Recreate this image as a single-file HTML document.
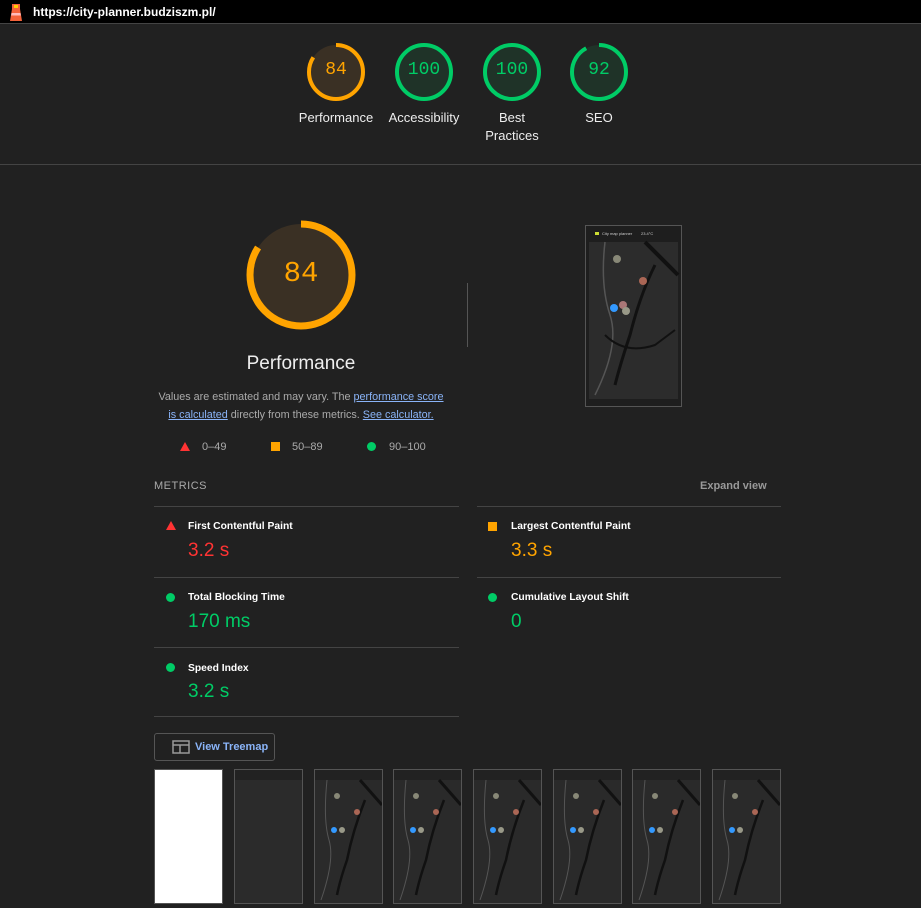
<!DOCTYPE html>
<html><head><meta charset="utf-8"><style>
*{margin:0;padding:0;box-sizing:border-box}
body{width:921px;height:906px;background:#212121;font-family:"Liberation Sans",Arial,sans-serif;color:#fff;position:relative;overflow:hidden}
.a{position:absolute}
.top{left:0;top:0;width:921px;height:24px;background:#000;border-bottom:1px solid #444}
.url{left:33px;top:5px;font-size:12px;font-weight:bold;color:#fff}
.g{position:absolute;width:60px;text-align:center}
.g svg{display:block;margin:0 auto}
.g .n{position:absolute;left:0;top:18px;width:60px;text-align:center;font-family:"Liberation Mono",monospace;font-size:18px}
.gl{position:absolute;width:100px;text-align:center;font-size:13px;line-height:18px;color:#eee}
.hr{height:1px;background:#444}
.mt{font-size:10.3px;font-weight:bold;color:#fff}
.mv{font-size:19px}
.ic{position:absolute}
.tri{width:0;height:0;border-left:5px solid transparent;border-right:5px solid transparent;border-bottom:9px solid #f33}
.sq{width:9px;height:9px;background:#ffa400}
.ci{width:9px;height:9px;border-radius:50%;background:#0c6}
a{color:#8ab4f8;text-decoration:underline}
.fr{position:absolute;top:769px;width:69px;height:135px;border:1px solid #555;background:#2b2b2b}
</style></head><body>
<div class="a top"></div>
<svg class="a" style="left:8px;top:2px" width="16" height="20" viewBox="0 0 16 20"><rect x="4" y="2" width="8" height="5" fill="#f4623a"/><rect x="6" y="3" width="4" height="3" fill="#fc0"/><path d="M4 7h8l2 12H2z" fill="#f4623a"/><path d="M3.5 11h9l.4 2.5H3.1z" fill="#fbb"/></svg>
<div class="a url">https://city-planner.budziszm.pl/</div>

<div class="g" style="left:306px;top:42px"><svg width="60" height="60"><circle cx="30" cy="30" r="27" fill="#3a3024" stroke="none"/><circle cx="30" cy="30" r="27" fill="none" stroke="#ffa400" stroke-width="4" stroke-dasharray="142.5 200" transform="rotate(-90 30 30)"/></svg><div class="n" style="color:#ffa400">84</div></div>
<div class="g" style="left:394px;top:42px"><svg width="60" height="60"><circle cx="30" cy="30" r="27" fill="#1f3328" stroke="#0c6" stroke-width="4"/></svg><div class="n" style="color:#0c6">100</div></div>
<div class="g" style="left:482px;top:42px"><svg width="60" height="60"><circle cx="30" cy="30" r="27" fill="#1f3328" stroke="#0c6" stroke-width="4"/></svg><div class="n" style="color:#0c6">100</div></div>
<div class="g" style="left:569px;top:42px"><svg width="60" height="60"><circle cx="30" cy="30" r="27" fill="#1f3328"/><circle cx="30" cy="30" r="27" fill="none" stroke="#0c6" stroke-width="4" stroke-dasharray="156 200" transform="rotate(-90 30 30)"/></svg><div class="n" style="color:#0c6">92</div></div>
<div class="gl" style="left:286px;top:109px">Performance</div>
<div class="gl" style="left:374px;top:109px">Accessibility</div>
<div class="gl" style="left:462px;top:109px">Best<br>Practices</div>
<div class="gl" style="left:549px;top:109px">SEO</div>
<div class="a hr" style="left:0;top:164px;width:921px"></div>

<svg class="a" style="left:246px;top:220px" width="110" height="110"><circle cx="55" cy="55" r="51" fill="#3a3024"/><circle cx="55" cy="55" r="51" fill="none" stroke="#ffa400" stroke-width="7" stroke-dasharray="269 400" transform="rotate(-90 55 55)"/></svg>
<div class="a" style="left:246px;top:257px;width:110px;text-align:center;font-family:'Liberation Mono',monospace;font-size:29px;color:#ffa400">84</div>
<div class="a" style="left:201px;top:353px;width:200px;text-align:center;font-size:19px;color:#eee">Performance</div>
<div class="a" style="left:131px;top:389px;width:340px;text-align:center;font-size:10.8px;line-height:17.5px;color:#aaa;white-space:nowrap">Values are estimated and may vary. The <a>performance score</a><br><a>is calculated</a> directly from these metrics. <a>See calculator.</a></div>
<div class="ic tri" style="left:180px;top:442px"></div><div class="a" style="left:202px;top:441px;font-size:11px;color:#aaa">0–49</div>
<div class="ic sq" style="left:271px;top:442px"></div><div class="a" style="left:292px;top:441px;font-size:11px;color:#aaa">50–89</div>
<div class="ic ci" style="left:367px;top:442px"></div><div class="a" style="left:389px;top:441px;font-size:11px;color:#aaa">90–100</div>
<div class="a" style="left:467px;top:283px;width:1px;height:64px;background:#555"></div>

<svg class="a" style="left:585px;top:225px" width="97" height="182" viewBox="0 0 97 182"><rect x=".5" y=".5" width="96" height="181" fill="#1e1e1e" stroke="#555"/><rect x="4" y="17" width="89" height="157" fill="#2c2c2c"/><rect x="10" y="7" width="4" height="3" fill="#cd3"/><text x="17" y="10" font-size="4" fill="#ccc">City map planner</text><text x="56" y="10" font-size="4" fill="#ccc">23.4°C</text><path d="M20 17 Q15 60 25 90 T10 170" stroke="#555" fill="none" stroke-width="1.5"/><path d="M70 40 Q55 70 45 110 Q35 140 30 160" stroke="#111" fill="none" stroke-width="3"/><path d="M60 17 L93 50" stroke="#111" stroke-width="4"/><path d="M20 110 Q40 130 70 120 L90 105" stroke="#111" fill="none" stroke-width="2"/><circle cx="32" cy="34" r="4" fill="#887"/><circle cx="58" cy="56" r="4" fill="#a65"/><circle cx="29" cy="83" r="4" fill="#39f"/><circle cx="38" cy="80" r="4" fill="#a77"/><circle cx="41" cy="86" r="4" fill="#998"/></svg>

<div class="a" style="left:154px;top:480px;font-size:11px;letter-spacing:.5px;color:#aaa">METRICS</div>
<div class="a" style="left:700px;top:480px;font-size:11px;font-weight:bold;color:#999">Expand view</div>
<div class="a hr" style="left:154px;top:506px;width:305px"></div>
<div class="a hr" style="left:477px;top:506px;width:304px"></div>

<div class="ic tri" style="left:166px;top:521px"></div><div class="a mt" style="left:188px;top:521px">First Contentful Paint</div><div class="a mv" style="left:188px;top:540px;color:#f33">3.2 s</div>
<div class="ic sq" style="left:488px;top:522px"></div><div class="a mt" style="left:511px;top:521px">Largest Contentful Paint</div><div class="a mv" style="left:511px;top:540px;color:#ffa400">3.3 s</div>
<div class="a hr" style="left:154px;top:577px;width:305px"></div>
<div class="a hr" style="left:477px;top:577px;width:304px"></div>
<div class="ic ci" style="left:166px;top:593px"></div><div class="a mt" style="left:188px;top:592px">Total Blocking Time</div><div class="a mv" style="left:188px;top:611px;color:#0c6">170 ms</div>
<div class="ic ci" style="left:488px;top:593px"></div><div class="a mt" style="left:511px;top:592px">Cumulative Layout Shift</div><div class="a mv" style="left:511px;top:611px;color:#0c6">0</div>
<div class="a hr" style="left:154px;top:647px;width:305px"></div>
<div class="ic ci" style="left:166px;top:663px"></div><div class="a mt" style="left:188px;top:663px">Speed Index</div><div class="a mv" style="left:188px;top:681px;color:#0c6">3.2 s</div>
<div class="a hr" style="left:154px;top:716px;width:305px"></div>

<div class="a" style="left:154px;top:733px;width:121px;height:28px;border:1px solid #555;border-radius:3px"></div>
<svg class="a" style="left:172px;top:740px" width="18" height="14"><rect x="1" y="1" width="16" height="12" fill="none" stroke="#999" stroke-width="1.5"/><path d="M1 5h16M8 5v8" stroke="#999" stroke-width="1.5"/></svg>
<div class="a" style="left:195px;top:741px;font-size:11px;font-weight:bold;color:#8ab4f8">View Treemap</div>

<div class="fr" style="left:154px;background:#fff"></div>
<div class="fr" style="left:234px"><div style="height:10px;background:#222"></div></div>
<div class="fr" style="left:314px;background:#2a2a2a"><svg width="67" height="133"><rect width="67" height="10" fill="#222"/><path d="M12 10 Q8 50 14 70 T6 130" stroke="#555" fill="none"/><path d="M50 30 Q38 60 32 90 Q25 110 22 125" stroke="#111" fill="none" stroke-width="2.5"/><path d="M45 10 L67 35" stroke="#111" stroke-width="3"/><circle cx="22" cy="26" r="3" fill="#887"/><circle cx="42" cy="42" r="3" fill="#a65"/><circle cx="19" cy="60" r="3" fill="#39f"/><circle cx="27" cy="60" r="3" fill="#998"/></svg></div>
<div class="fr" style="left:393px;background:#2a2a2a"><svg width="67" height="133"><rect width="67" height="10" fill="#222"/><path d="M12 10 Q8 50 14 70 T6 130" stroke="#555" fill="none"/><path d="M50 30 Q38 60 32 90 Q25 110 22 125" stroke="#111" fill="none" stroke-width="2.5"/><path d="M45 10 L67 35" stroke="#111" stroke-width="3"/><circle cx="22" cy="26" r="3" fill="#887"/><circle cx="42" cy="42" r="3" fill="#a65"/><circle cx="19" cy="60" r="3" fill="#39f"/><circle cx="27" cy="60" r="3" fill="#998"/></svg></div>
<div class="fr" style="left:473px;background:#2a2a2a"><svg width="67" height="133"><rect width="67" height="10" fill="#222"/><path d="M12 10 Q8 50 14 70 T6 130" stroke="#555" fill="none"/><path d="M50 30 Q38 60 32 90 Q25 110 22 125" stroke="#111" fill="none" stroke-width="2.5"/><path d="M45 10 L67 35" stroke="#111" stroke-width="3"/><circle cx="22" cy="26" r="3" fill="#887"/><circle cx="42" cy="42" r="3" fill="#a65"/><circle cx="19" cy="60" r="3" fill="#39f"/><circle cx="27" cy="60" r="3" fill="#998"/></svg></div>
<div class="fr" style="left:553px;background:#2a2a2a"><svg width="67" height="133"><rect width="67" height="10" fill="#222"/><path d="M12 10 Q8 50 14 70 T6 130" stroke="#555" fill="none"/><path d="M50 30 Q38 60 32 90 Q25 110 22 125" stroke="#111" fill="none" stroke-width="2.5"/><path d="M45 10 L67 35" stroke="#111" stroke-width="3"/><circle cx="22" cy="26" r="3" fill="#887"/><circle cx="42" cy="42" r="3" fill="#a65"/><circle cx="19" cy="60" r="3" fill="#39f"/><circle cx="27" cy="60" r="3" fill="#998"/></svg></div>
<div class="fr" style="left:632px;background:#2a2a2a"><svg width="67" height="133"><rect width="67" height="10" fill="#222"/><path d="M12 10 Q8 50 14 70 T6 130" stroke="#555" fill="none"/><path d="M50 30 Q38 60 32 90 Q25 110 22 125" stroke="#111" fill="none" stroke-width="2.5"/><path d="M45 10 L67 35" stroke="#111" stroke-width="3"/><circle cx="22" cy="26" r="3" fill="#887"/><circle cx="42" cy="42" r="3" fill="#a65"/><circle cx="19" cy="60" r="3" fill="#39f"/><circle cx="27" cy="60" r="3" fill="#998"/></svg></div>
<div class="fr" style="left:712px;background:#2a2a2a"><svg width="67" height="133"><rect width="67" height="10" fill="#222"/><path d="M12 10 Q8 50 14 70 T6 130" stroke="#555" fill="none"/><path d="M50 30 Q38 60 32 90 Q25 110 22 125" stroke="#111" fill="none" stroke-width="2.5"/><path d="M45 10 L67 35" stroke="#111" stroke-width="3"/><circle cx="22" cy="26" r="3" fill="#887"/><circle cx="42" cy="42" r="3" fill="#a65"/><circle cx="19" cy="60" r="3" fill="#39f"/><circle cx="27" cy="60" r="3" fill="#998"/></svg></div>
</body></html>
